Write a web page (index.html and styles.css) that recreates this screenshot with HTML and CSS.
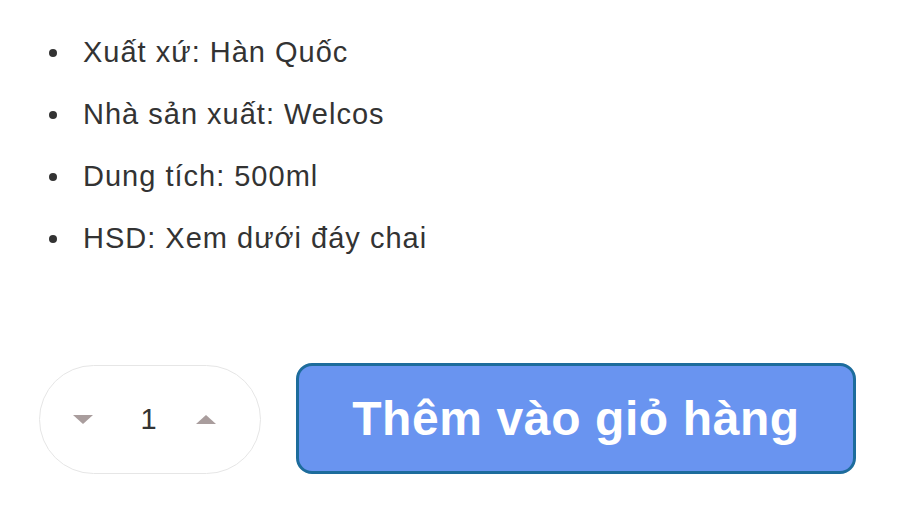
FILE: index.html
```html
<!DOCTYPE html>
<html lang="vi">
<head>
<meta charset="utf-8">
<link rel="stylesheet" href="styles.css">
</head>
<body>
<div class="product">
  <ul class="specs">
    <li>Xuất xứ: Hàn Quốc</li>
    <li>Nhà sản xuất: Welcos</li>
    <li>Dung tích: 500ml</li>
    <li>HSD: Xem dưới đáy chai</li>
  </ul>
  <div class="actions">
    <div class="qty">
      <span class="tri tri-down"></span>
      <span class="qty-value">1</span>
      <span class="tri tri-up"></span>
    </div>
    <button class="add-cart">Thêm vào giỏ hàng</button>
  </div>
</div>
</body>
</html>
```

FILE: styles.css
```css
html, body {
  margin: 0;
  padding: 0;
  background: #ffffff;
}

body {
  font-family: "Liberation Sans", Arial, sans-serif;
  color: #333333;
}

.product {
  padding: 21px 0 0 39px;
}

.specs {
  margin: 0;
  padding: 0;
  list-style: none;
  font-size: 29px;
  line-height: 62px;
  letter-spacing: 1px;
}

.specs li {
  margin: 0;
  display: flex;
  align-items: center;
}

.specs li::before {
  content: "";
  width: 8px;
  height: 8px;
  border-radius: 50%;
  background: #333333;
  margin: 2px 26px 0 10px;
  flex: none;
}

.actions {
  display: flex;
  align-items: center;
  gap: 35px;
  margin-top: 95px;
}

.qty {
  box-sizing: border-box;
  width: 222px;
  height: 109px;
  border: 1px solid #e6e6e6;
  border-radius: 55px;
  display: flex;
  align-items: center;
  padding-left: 33px;
}

.tri {
  width: 0;
  height: 0;
  border-left: 10px solid transparent;
  border-right: 10px solid transparent;
}

.tri-down {
  border-top: 9px solid #a99d9d;
}

.tri-up {
  border-bottom: 9px solid #a99d9d;
}

.qty-value {
  font-size: 29px;
  color: #333333;
  width: 103px;
  text-align: center;
  padding-left: 8px;
  box-sizing: border-box;
}

.add-cart {
  box-sizing: border-box;
  width: 560px;
  height: 111px;
  background: #6994f0;
  border: 3px solid #1d6c9c;
  border-radius: 16px;
  color: #ffffff;
  font-family: "Liberation Sans", Arial, sans-serif;
  font-weight: bold;
  font-size: 48px;
  letter-spacing: 0.6px;
  padding: 0;
  margin-top: -1px;
}
```
